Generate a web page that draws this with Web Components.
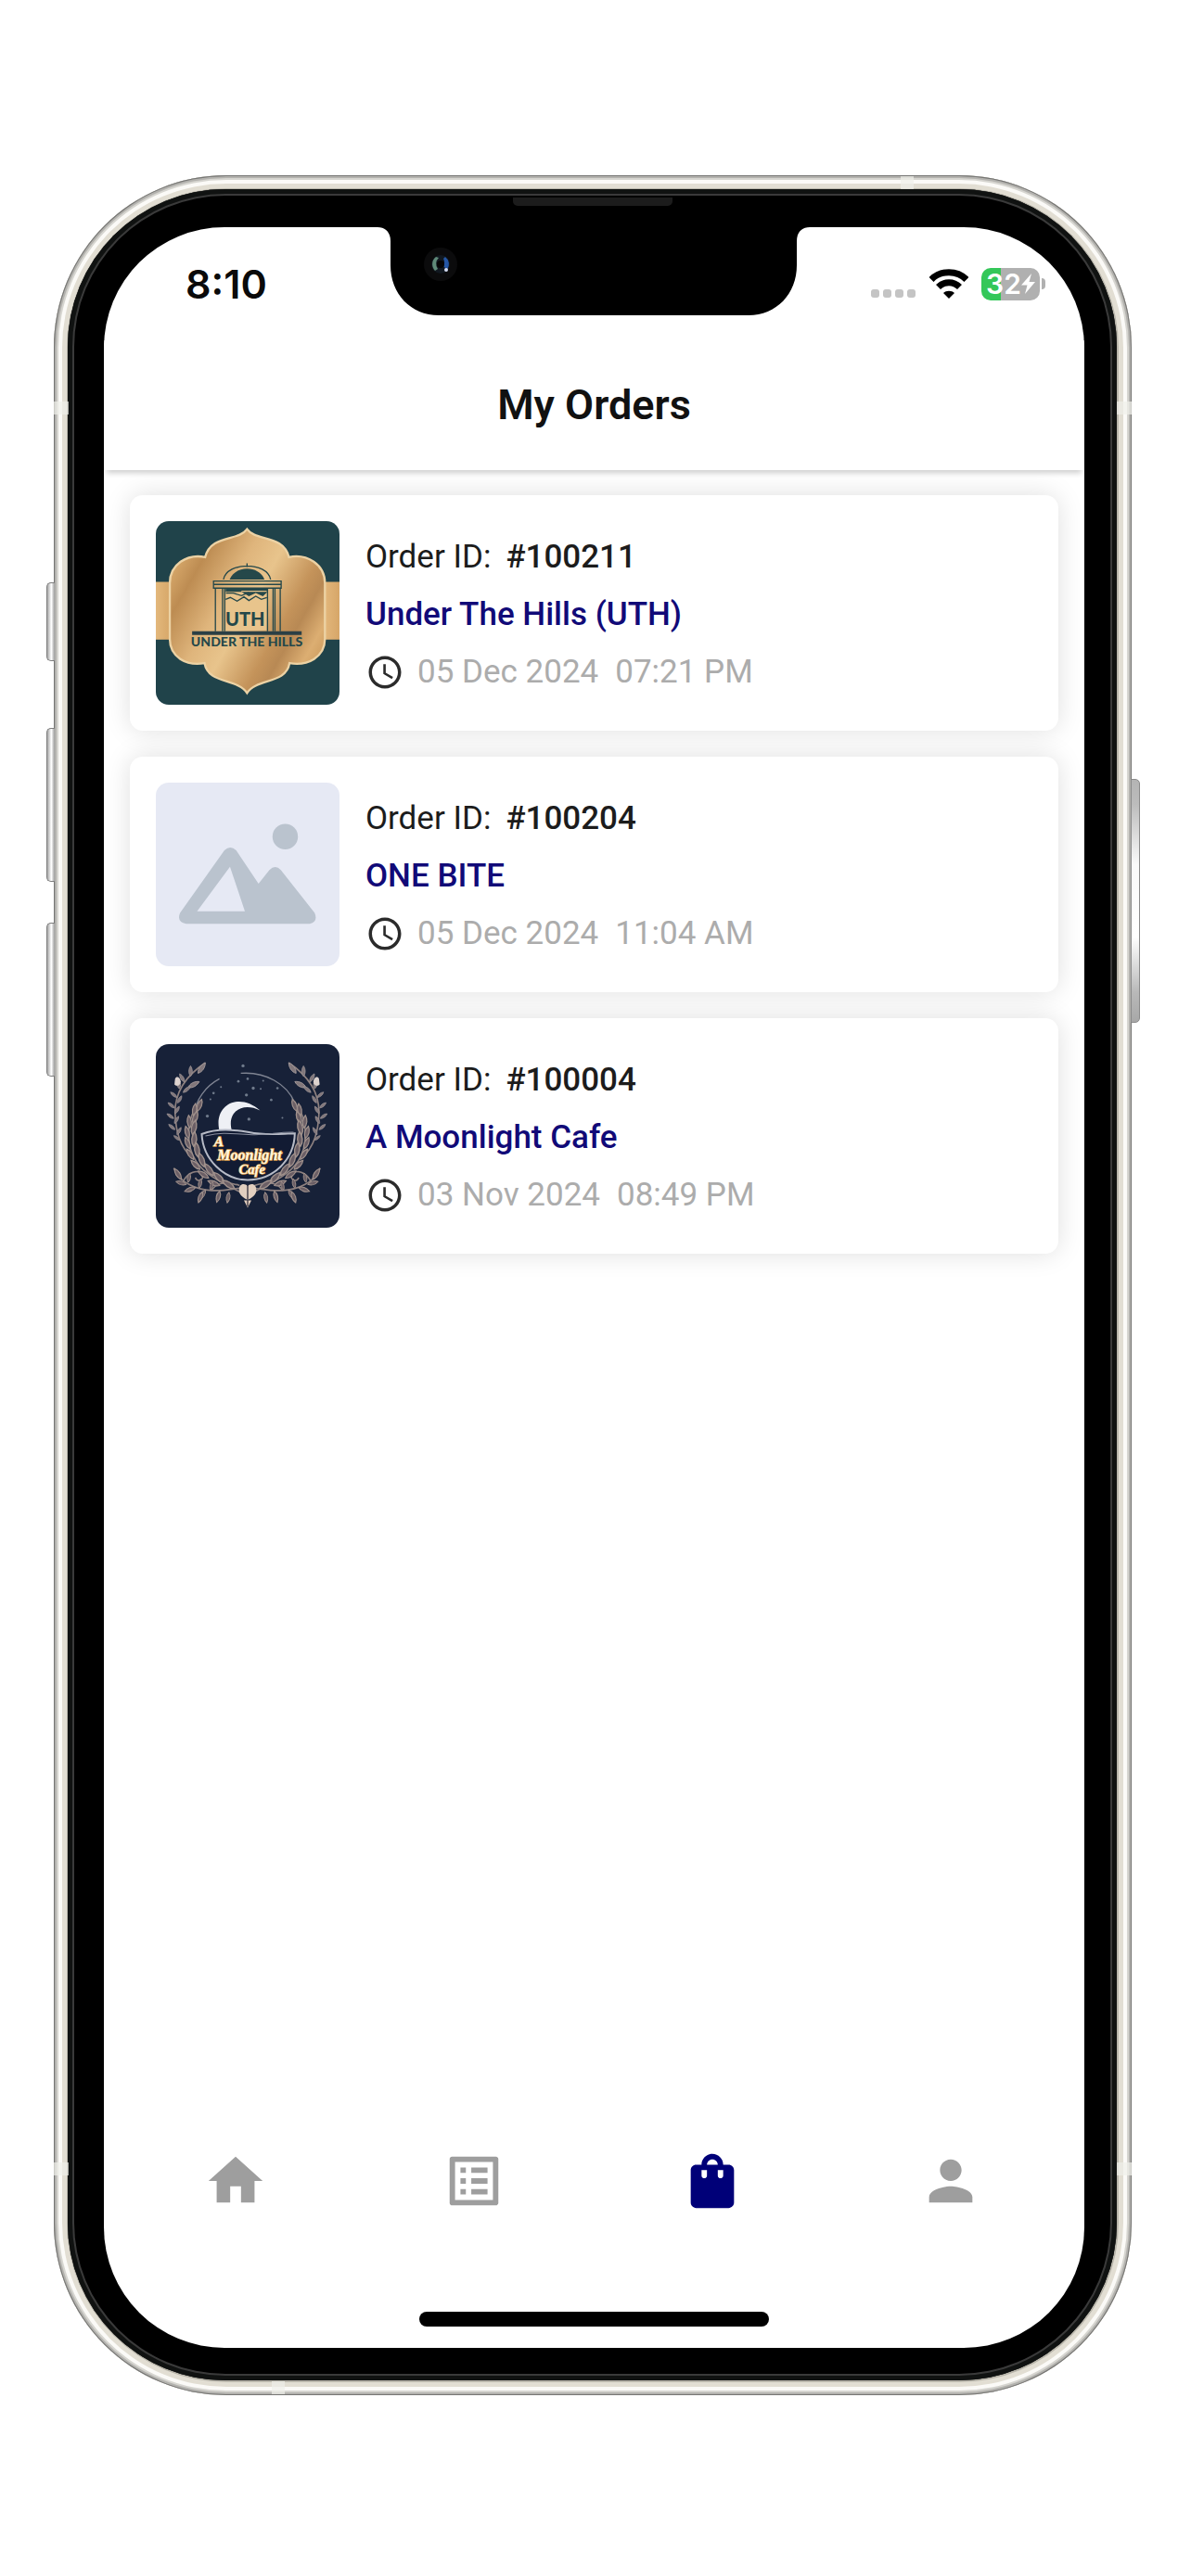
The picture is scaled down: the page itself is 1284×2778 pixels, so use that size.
<!DOCTYPE html>
<html lang="en">
<head>
<meta charset="utf-8">
<meta name="viewport" content="width=device-width, initial-scale=1">
<title>My Orders</title>
<style>
  * { box-sizing: border-box; }
  body {
    margin: 0;
    min-height: 100vh;
    padding: 189px 64px 195px 58px;
    display: flex;
    background: #fff;
    color: #1c1c1c;
    font-family: Roboto, "Liberation Sans", sans-serif;
  }
</style>
</head>
<body>

<phone-frame>
  <status-bar time="8:10" battery="32"></status-bar>
  <app-header>My Orders</app-header>
  <order-list>
    <order-card order-id="#100211" date="05 Dec 2024" time="07:21 PM">
      <uth-logo slot="thumb"></uth-logo>
      Under The Hills (UTH)
    </order-card>
    <order-card order-id="#100204" date="05 Dec 2024" time="11:04 AM">
      <empty-logo slot="thumb"></empty-logo>
      ONE BITE
    </order-card>
    <order-card order-id="#100004" date="03 Nov 2024" time="08:49 PM">
      <moonlight-logo slot="thumb"></moonlight-logo>
      A Moonlight Cafe
    </order-card>
  </order-list>
  <tab-bar active="orders"></tab-bar>
</phone-frame>

<script>
const makeTemplate = (html) => {
  const template = document.createElement('template')
  template.innerHTML = html
  return template
}

// <phone-frame>
const frameTemplate = makeTemplate(`
<style>
  * { box-sizing: border-box; }
  :host {
    flex: 1;
    display: flex;
    position: relative;
    padding: 15px 16px 16px 15px;
    border-radius: 186px;
    background: #b9b6ab;
    box-shadow:
      inset 0 0 0 1px #757573,
      inset 0 0 0 3px #b3b2ae,
      inset 0 0 0 5px #d6d5d0,
      inset 0 0 0 9px #fbfaf7,
      inset 0 0 0 14px #e2ded3;
  }
  .bezel {
    flex: 1;
    display: flex;
    padding: 41px 35px 35px 39px;
    border-radius: 170px;
    background: #000;
    box-shadow: inset 0 0 0 5px #101211, inset 0 0 0 7px #3a3a3a;
  }
  .screen {
    flex: 1;
    display: flex;
    flex-direction: column;
    position: relative;
    overflow: hidden;
    border-radius: 130px;
    background: #fff;
  }
  .notch {
    position: absolute;
    top: -1px;
    left: 50%;
    width: 466px;
    margin-left: -234px;
  }
  .notch svg { display: block; }
  .speaker {
    position: absolute;
    top: 24px;
    left: 50%;
    width: 172px;
    height: 9px;
    margin-left: -86px;
    border-radius: 0 0 5px 5px;
    background: #1c1c1c;
  }
  .key {
    position: absolute;
    left: -8px;
    width: 9px;
    border: 1px solid #7d7d7d;
    border-right: 0;
    border-radius: 5px 0 0 5px;
    background: linear-gradient(90deg, #a5a5a5, #fff 55%, #999);
  }
  .mute { top: 439px; height: 85px; }
  .up { top: 596px; height: 166px; }
  .down { top: 806px; height: 166px; }
  .power {
    top: 651px;
    left: auto;
    right: -9px;
    width: 10px;
    height: 263px;
    border: 1px solid #8a8a8a;
    border-radius: 0 5px 5px 0;
    background: linear-gradient(#b4b4b4, #bcbcbc 10%, #fafafa 35%, #fff 65%, #b8b8b8 88%, #a8a8a8);
  }
  .band {
    position: absolute;
    width: 16px;
    height: 14px;
    background: rgba(240, 240, 234, .7);
  }
  .left { left: 0; }
  .right { right: 0; }
  .high { top: 244px; }
  .low { bottom: 237px; }
  .top { top: 1px; right: 235px; width: 14px; }
  .bottom { bottom: 1px; left: 235px; width: 14px; }
</style>

<span class="key mute"></span>
<span class="key up"></span>
<span class="key down"></span>
<span class="key power"></span>
<div class="bezel">
  <div class="screen">
    <slot></slot>
    <div class="notch">
      <svg width="466" height="96" viewBox="0 0 466 96" aria-hidden="true">
        <path d="M0 0H466V1C457 1 452 7 452 16V42C452 73 430 96 400 96H66C36 96 14 73 14 42V16C14 7 9 1 0 1z"/>
        <circle cx="68" cy="41" r="18" fill="#0b0b0c"/>
        <circle cx="68" cy="41" r="10" fill="#111820"/>
        <path d="M63 33a10 10 0 0 0-1 15l3-2a9 9 0 0 1 1-12z" fill="#5f8a78"/>
        <path d="M73 33a10 10 0 0 1 2 14l-4-4a8 8 0 0 0 0-8z" fill="#2456a4"/>
        <circle cx="68" cy="41" r="4" fill="#050505"/>
        <circle cx="74" cy="47" r="2" fill="#d5dcf2"/>
      </svg>
    </div>
  </div>
</div>
<span class="speaker"></span>
<span class="band left high"></span>
<span class="band right high"></span>
<span class="band left low"></span>
<span class="band right low"></span>
<span class="band top"></span>
<span class="band bottom"></span>
`)

class PhoneFrame extends HTMLElement {
  constructor() {
    super()
    this.attachShadow({mode: 'open'})
    this.shadowRoot.appendChild(frameTemplate.content.cloneNode(true))
  }
}
window.customElements.define('phone-frame', PhoneFrame)

// <status-bar time battery>
const statusTemplate = makeTemplate(`
<style>
  :host {
    display: flex;
    align-items: center;
    justify-content: space-between;
    height: 122px;
    padding: 0 42px 0 88px;
    font-family: Inter, "Liberation Sans", sans-serif;
  }
  .time { font-size: 43px; font-weight: 600; color: #0a0a0a; }
  .icons { display: flex; align-items: center; gap: 14px; }
  svg { display: block; }
  .battery { display: flex; align-items: center; gap: 2px; }
  .cell {
    display: flex;
    align-items: center;
    justify-content: center;
    width: 63px;
    height: 35px;
    border-radius: 10px;
    background: linear-gradient(90deg, #34c759 33%, #b0b0b0 33%);
    color: #fff;
    font-size: 30px;
    line-height: 35px;
    font-weight: 600;
  }
  .nub { width: 4px; height: 12px; border-radius: 0 5px 5px 0; background: #b0b0b0; }
</style>
<span class="time"></span>
<div class="icons">
  <svg width="49" height="32" viewBox="0 0 49 32" fill="#c4c4c4" aria-hidden="true">
    <rect x="0" y="22" width="9" height="9" rx="3"/>
    <rect x="13" y="22" width="9" height="9" rx="3"/>
    <rect x="26" y="22" width="9" height="9" rx="3"/>
    <rect x="39" y="22" width="9" height="9" rx="3"/>
  </svg>
  <svg width="42" height="32" viewBox="0 0 42 32" aria-hidden="true">
    <g fill="none" stroke="#000" stroke-width="7">
      <path d="M2 11.500C12 1 30 1 40 11.500"/>
      <path d="M9.500 19.500C16 13 26 13 32.500 19.500"/>
    </g>
    <path d="M15 26C18 23 24 23 27 26L21 32z"/>
  </svg>
  <div class="battery">
    <div class="cell">
      <span class="level"></span>
      <svg width="15" height="22" viewBox="0 0 15 22" fill="#fff" aria-hidden="true">
        <path d="M11 0L0 12.500h6.500L4 22L15 9H8.500z"/>
      </svg>
    </div>
    <span class="nub"></span>
  </div>
</div>
`)

class StatusBar extends HTMLElement {
  constructor() {
    super()
    this.attachShadow({mode: 'open'})
    this.shadowRoot.appendChild(statusTemplate.content.cloneNode(true))
  }

  connectedCallback() {
    this.shadowRoot.querySelector('.time').textContent = this.getAttribute('time')
    this.shadowRoot.querySelector('.level').textContent = this.getAttribute('battery')
  }
}
window.customElements.define('status-bar', StatusBar)

// <app-header>
const headerTemplate = makeTemplate(`
<style>
  :host {
    display: flex;
    align-items: center;
    justify-content: center;
    height: 140px;
    position: relative;
    background: #fff;
    box-shadow: 0 6px 6px -3px rgba(0, 0, 0, .2);
  }
  h1 { margin: 0; font-size: 45px; line-height: 54px; font-weight: 600; color: #111; }
</style>
<h1><slot></slot></h1>
`)

class AppHeader extends HTMLElement {
  constructor() {
    super()
    this.attachShadow({mode: 'open'})
    this.shadowRoot.appendChild(headerTemplate.content.cloneNode(true))
  }
}
window.customElements.define('app-header', AppHeader)

// <order-list>
const listTemplate = makeTemplate(`
<style>
  :host {
    flex: 1;
    display: flex;
    flex-direction: column;
    gap: 28px;
    padding: 27px 28px;
  }
</style>
<slot></slot>
`)

class OrderList extends HTMLElement {
  constructor() {
    super()
    this.attachShadow({mode: 'open'})
    this.shadowRoot.appendChild(listTemplate.content.cloneNode(true))
  }
}
window.customElements.define('order-list', OrderList)

// <order-card order-id date time>
const cardTemplate = makeTemplate(`
<style>
  :host {
    display: flex;
    align-items: center;
    gap: 28px;
    padding: 28px;
    border-radius: 14px;
    background: #fff;
    box-shadow: 0 0 28px rgba(0, 0, 0, .13);
    font-size: 35px;
    line-height: 42px;
  }
  .thumb {
    flex: none;
    width: 198px;
    height: 198px;
    border-radius: 14px;
    overflow: hidden;
  }
  .info { display: flex; flex-direction: column; gap: 20px; padding-top: 4px; }
  .row { display: flex; }
  .id { gap: 16px; }
  strong, h2 { margin: 0; font-size: 35px; font-weight: 500; }
  h2 { color: #110a78; }
  .placed { align-items: center; gap: 18px; color: #acacac; }
  svg { display: block; margin-right: -4px; }
</style>
<div class="thumb"><slot name="thumb"></slot></div>
<div class="info">
  <div class="row id"><span>Order ID:</span><strong></strong></div>
  <h2><slot></slot></h2>
  <div class="row placed">
    <svg width="42" height="42" viewBox="0 0 24 24" fill="#2b2b2b" aria-hidden="true">
      <path d="M11.990 2C6.470 2 2 6.480 2 12s4.470 10 9.990 10C17.520 22 22 17.520 22 12S17.520 2 11.990 2zM12 20c-4.420 0-8-3.580-8-8s3.580-8 8-8 8 3.580 8 8-3.580 8-8 8zm.5-13H11v6l5.250 3.150.75-1.230-4.500-2.670z"/>
    </svg>
    <span class="date"></span>
    <span class="time"></span>
  </div>
</div>
`)

class OrderCard extends HTMLElement {
  constructor() {
    super()
    this.attachShadow({mode: 'open'})
    this.shadowRoot.appendChild(cardTemplate.content.cloneNode(true))
  }

  connectedCallback() {
    this.shadowRoot.querySelector('strong').textContent = this.getAttribute('order-id')
    this.shadowRoot.querySelector('.date').textContent = this.getAttribute('date')
    this.shadowRoot.querySelector('.time').textContent = this.getAttribute('time')
  }
}
window.customElements.define('order-card', OrderCard)

// <uth-logo>
const uthTemplate = makeTemplate(`
<style>
  :host { display: block; }
  svg { display: block; width: 100%; }
  text { font-family: Lato, "Open Sans", sans-serif; font-weight: 900; fill: #25484a; text-anchor: middle; }
</style>
<svg viewBox="0 0 592 592" role="img" aria-label="Under The Hills">
  <defs>
    <linearGradient id="gold" x1="0" y1=".2" x2="1" y2=".8">
      <stop offset="0" stop-color="#dcae70"/>
      <stop offset=".15" stop-color="#bd8c52"/>
      <stop offset=".35" stop-color="#dfb57c"/>
      <stop offset=".5" stop-color="#e8c48c"/>
      <stop offset=".7" stop-color="#c4935a"/>
      <stop offset=".78" stop-color="#b88954"/>
      <stop offset=".9" stop-color="#dcae72"/>
      <stop offset="1" stop-color="#cb9a5c"/>
    </linearGradient>
    <linearGradient id="ribbon" x1="0" y1="0" x2="1" y2="0">
      <stop offset="0" stop-color="#e3b87c"/>
      <stop offset=".1" stop-color="#d3a263"/>
      <stop offset=".9" stop-color="#e6bb80"/>
      <stop offset="1" stop-color="#d6a668"/>
    </linearGradient>
  </defs>
  <rect width="592" height="592" fill="#20434a"/>
  <path d="M0 196H592V382H0z" fill="url(#ribbon)"/>
  <path d="M294 26C266 66 178 42 159 116C100 104 45 140 45 200V380C45 438 98 468 157 458C168 526 262 506 294 554C326 506 420 526 431 458C490 468 545 438 545 380V200C545 140 488 104 429 116C410 42 322 66 294 26z" fill="url(#gold)" stroke="#ecd2a4" stroke-width="7"/>
  <path d="M228 230H358V352H228z" fill="#e8c48c"/>
  <g fill="none" stroke="#25484a" stroke-width="4">
    <path d="M294 136V148M218 188C230 130 358 130 370 188M186 193H404V216H186zM186 204H404"/>
    <path d="M192 216V355M215 216V355M222 216V355M360 216V355M378 216V355M384 216V355M401 216V355"/>
    <path d="M225 252L240 246L262 258L284 244L300 256L322 242L340 252L358 246M226 232L250 232L276 240L300 230"/>
  </g>
  <path d="M238 188C256 142 332 142 350 188z" fill="#25484a"/>
  <path d="M225 218H360V228H225zM276 228L300 242L322 232L345 242L358 230V224H276z" fill="#25484a"/>
  <path d="M117 355H470V367H117z" fill="#2b3f45"/>
  <text x="288" y="338" font-size="60">UTH</text>
  <text x="293" y="404" font-size="42">UNDER THE HILLS</text>
</svg>
`)

class UthLogo extends HTMLElement {
  constructor() {
    super()
    this.attachShadow({mode: 'open'})
    this.shadowRoot.appendChild(uthTemplate.content.cloneNode(true))
  }
}
window.customElements.define('uth-logo', UthLogo)

// <empty-logo> stands in when a restaurant has no picture
const emptyTemplate = makeTemplate(`
<style>
  :host { display: block; }
  svg { display: block; width: 100%; }
</style>
<svg viewBox="0 0 592 592" role="img" aria-label="No picture">
  <rect width="592" height="592" fill="#e6e9f4"/>
  <circle cx="417" cy="174" r="41" fill="#bac3ce"/>
  <path fill="#bac3ce" fill-rule="evenodd" d="M221 218Q240 200 259 218L331 326L366 282Q385 262 403 282L512 420Q524 449 496 455H98Q66 449 78 420zM239 271L133 415H287z"/>
</svg>
`)

class EmptyLogo extends HTMLElement {
  constructor() {
    super()
    this.attachShadow({mode: 'open'})
    this.shadowRoot.appendChild(emptyTemplate.content.cloneNode(true))
  }
}
window.customElements.define('empty-logo', EmptyLogo)

// <moonlight-logo>
const leaf = (x, y, angle, size) =>
  `<path d="M0 0C-8 -10 -7 -24 0 -34C7 -24 8 -10 0 0z" transform="translate(${x} ${y}) rotate(${angle}) scale(${size})"/>`

// x, y, angle, size of each leaf on the left half
const outerLeaves = [
  [136, 94, 35, 1.2], [112, 104, 0, 1], [104, 140, 62, 1.2], [92, 122, -30, .9], [88, 156, 50, .9],
  [76, 144, -10, 1.1], [68, 172, -50, .8], [70, 190, 30, .8], [60, 206, -50, .8], [62, 224, 30, .8],
  [58, 240, -55, .8], [60, 256, 30, .8], [62, 276, -50, .8], [68, 292, 30, .8], [76, 310, -50, .7]
]
const innerLeaves = [
  [134, 216, 20, 1.2], [122, 232, 8, 1.2], [120, 258, 18, 1.3], [110, 270, -6, 1.2], [118, 292, 12, 1.4],
  [106, 304, -14, 1.2], [122, 330, 4, 1.4], [110, 338, -22, 1.2], [136, 364, -8, 1.4], [122, 372, -34, 1.2],
  [156, 396, -20, 1.4], [142, 404, -44, 1.2], [186, 424, -36, 1.4], [170, 432, -56, 1.2],
  [220, 448, -44, 1.4], [206, 456, -68, 1.2], [254, 466, -56, 1.4]
]
const lowerLeaves = [
  [82, 436, -32, 1.2], [98, 452, -75, 1], [104, 446, 10, .9], [128, 462, -110, 1.1], [140, 464, 10, .9],
  [160, 470, -150, 1], [176, 470, 15, .8], [206, 474, -165, 1.1], [236, 478, -170, 1], [150, 476, 200, 1.1]
]

const moonlightTemplate = makeTemplate(`
<style>
  :host { display: block; }
  svg { display: block; width: 100%; }
  text {
    font-family: "Liberation Serif", serif;
    font-style: italic;
    font-weight: 700;
    fill: #fff6de;
    stroke: #e0a04c;
    stroke-width: 4px;
    paint-order: stroke;
    text-anchor: middle;
  }
</style>
<svg viewBox="0 0 592 592" role="img" aria-label="A Moonlight Cafe">
  <rect width="592" height="592" fill="#172138"/>
  <g fill="none" stroke="#7f8492" stroke-width="4">
    <path d="M205 112C160 136 128 180 124 226M274 94C352 88 424 128 448 190"/>
  </g>
  <defs>
    <g id="half">
      <g fill="none" stroke="#8d807f" stroke-width="5">
        <path d="M160 60C100 100 62 150 62 220C64 280 76 330 120 370"/>
        <path d="M150 184C100 220 92 320 130 378C160 424 220 450 290 486"/>
        <path d="M58 400C76 446 130 470 180 472C220 474 250 466 290 462M84 452C100 410 140 400 150 424C156 440 130 446 128 430M180 470C200 440 240 446 270 456"/>
      </g>
      <g fill="#6b5f66" stroke="#a0918c" stroke-width="3">
        ${innerLeaves.map((l) => leaf(...l)).join('')}
        ${lowerLeaves.map((l) => leaf(...l)).join('')}
      </g>
      <g fill="#81777b" stroke="#a59c9d" stroke-width="2">
        ${outerLeaves.map((l) => leaf(...l)).join('')}
      </g>
      <path d="M62 112C66 102 78 106 80 120C80 134 66 138 60 130z" fill="#ddd3cf"/>
    </g>
  </defs>
  <use href="#half"/>
  <use href="#half" transform="translate(588 0) scale(-1 1)"/>
  <g fill="#6f7a8b">
    <circle cx="281" cy="70" r="5"/><circle cx="266" cy="120" r="4"/><circle cx="296" cy="112" r="4"/>
    <circle cx="314" cy="142" r="5"/><circle cx="292" cy="164" r="5"/><circle cx="346" cy="118" r="3"/>
    <circle cx="392" cy="142" r="4"/><circle cx="372" cy="180" r="4"/><circle cx="186" cy="158" r="4"/>
    <circle cx="176" cy="178" r="3"/><circle cx="166" cy="232" r="5"/><circle cx="300" cy="242" r="5"/>
    <circle cx="408" cy="238" r="3"/><circle cx="210" cy="138" r="3"/><circle cx="338" cy="144" r="3"/>
  </g>
  <path d="M206 284C182 196 268 152 336 214C278 184 226 220 246 282z" fill="#eef0f5"/>
  <path d="M148 290C200 270 250 276 300 284C360 296 410 288 448 288C446 372 380 438 296 438C220 438 152 372 148 290z" fill="#121b33" stroke="#b6bac6" stroke-width="6"/>
  <path d="M160 296C230 280 250 292 310 292C360 294 400 282 444 284" fill="none" stroke="#8b90a0" stroke-width="3"/>
  <text x="203" y="330" font-size="46">A</text>
  <text x="302" y="374" font-size="48">Moonlight</text>
  <text x="310" y="420" font-size="44">Cafe</text>
  <path d="M268 468C270 448 288 448 296 458C304 448 322 448 324 468C326 486 306 498 296 502C286 498 266 486 268 468zM284 504L296 528L308 504z" fill="#e2cfbf"/>
  <path d="M296 454V524" fill="none" stroke="#3a3540" stroke-width="4"/>
</svg>
`)

class MoonlightLogo extends HTMLElement {
  constructor() {
    super()
    this.attachShadow({mode: 'open'})
    this.shadowRoot.appendChild(moonlightTemplate.content.cloneNode(true))
  }
}
window.customElements.define('moonlight-logo', MoonlightLogo)

// <tab-bar active>
const tabTemplate = makeTemplate(`
<style>
  :host { display: block; padding-bottom: 23px; }
  nav { display: flex; padding: 0 16px 0 14px; }
  a { flex: 1; display: flex; justify-content: center; padding: 35px 0; color: #9e9e9e; }
  a[aria-current] { color: #000078; }
  svg { display: block; fill: currentColor; }
  .indicator { width: 377px; height: 16px; margin: 71px auto 0; border-radius: 8px; background: #000; }
</style>
<nav aria-label="Main">
  <a href="#home" aria-label="Home">
    <svg width="70" height="70" viewBox="0 0 24 24"><path d="M10 20v-6h4v6h5v-8h3L12 3 2 12h3v8z"/></svg>
  </a>
  <a href="#menu" aria-label="Menu">
    <svg width="70" height="70" viewBox="0 0 24 24"><path d="M19 5v14H5V5h14m1.100-2H3.900c-.5 0-.9.4-.9.9v16.200c0 .4.4.9.9.9h16.200c.4 0 .9-.5.9-.9V3.900c0-.5-.5-.9-.9-.9zM11 7h6v2h-6zm0 4h6v2h-6zm0 4h6v2h-6zM7 7h2v2H7zm0 4h2v2H7zm0 4h2v2H7z"/></svg>
  </a>
  <a href="#orders" aria-label="Orders">
    <svg width="70" height="70" viewBox="0 0 24 24"><path d="M18 6h-2c0-2.210-1.790-4-4-4S8 3.790 8 6H6c-1.100 0-2 .9-2 2v12c0 1.100.9 2 2 2h12c1.100 0 2-.9 2-2V8c0-1.100-.9-2-2-2zm-8 4c0 .55-.45 1-1 1s-1-.45-1-1V8h2zm2-6c1.100 0 2 .9 2 2h-4c0-1.100.9-2 2-2zm4 6c0 .55-.45 1-1 1s-1-.45-1-1V8h2z"/></svg>
  </a>
  <a href="#profile" aria-label="Profile">
    <svg width="70" height="70" viewBox="0 0 24 24"><path d="M12 12c2.210 0 4-1.790 4-4s-1.790-4-4-4-4 1.790-4 4 1.790 4 4 4zm0 2c-2.670 0-8 1.340-8 4v2h16v-2c0-2.660-5.330-4-8-4z"/></svg>
  </a>
</nav>
<div class="indicator"></div>
`)

class TabBar extends HTMLElement {
  constructor() {
    super()
    this.attachShadow({mode: 'open'})
    this.shadowRoot.appendChild(tabTemplate.content.cloneNode(true))
  }

  connectedCallback() {
    const link = this.shadowRoot.querySelector(`a[href="#${this.getAttribute('active')}"]`)
    if (link) link.setAttribute('aria-current', 'page')
  }
}
window.customElements.define('tab-bar', TabBar)
</script>
</body>
</html>
